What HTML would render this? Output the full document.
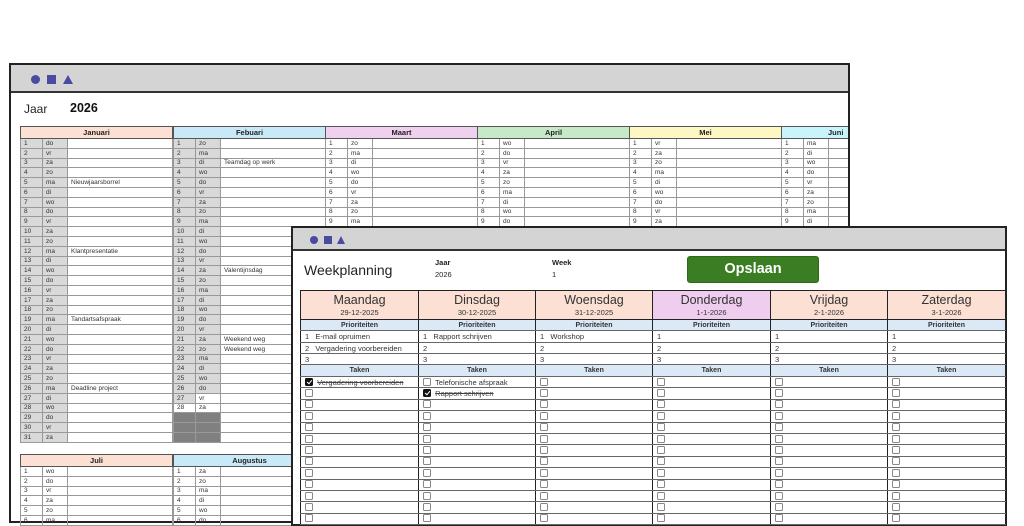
<!DOCTYPE html>
<html><head><meta charset="utf-8"><style>
*{margin:0;padding:0;box-sizing:border-box}
body{width:1024px;height:512px;overflow:hidden;background:#fff;font-family:"Liberation Sans",sans-serif;position:relative}
.sheet{position:absolute;background:#fff;border:2px solid #222}
.bar{position:absolute;left:0;right:0;top:0;background:#d4d4d4;border-bottom:2px solid #333}
.ic{position:absolute;background:#4a4aa0}
table{border-collapse:collapse;table-layout:fixed;position:absolute}
.cal td{border:1px solid #999;font-size:6.5px;line-height:7px;height:9.8px;padding:0 0 0 3px;color:#333;white-space:nowrap;overflow:hidden}
.cal td.n,.cal td.d{background:#d9d9d9}
.cal td.x{background:#808080}
.cal th{border:1px solid #555;font-size:7.5px;height:12px;font-weight:bold;color:#222}
.wk td{border-left:1.5px solid #222;border-right:1.5px solid #222;border-bottom:1px solid #666;font-size:7.5px;color:#333;padding-left:4px;white-space:nowrap;overflow:hidden}
.wk .hd{text-align:center;border-bottom:1.5px solid #222;padding:0;border-top:1.5px solid #222}
.wk .hd b{display:block;font-weight:normal;font-size:12.5px;color:#333;line-height:15px;margin-top:1px}
.wk .hd i{display:block;font-style:normal;font-size:7.5px;line-height:10px}
.wk .ph{background:#dbe8f6;text-align:center;font-weight:bold;padding:0;font-size:7px}
.cb{display:inline-block;width:8px;height:8px;border:1px solid #888;border-radius:1.5px;vertical-align:-1px;background:#fff}
.cb.k{background:#111;border-color:#111;position:relative}
.cb.k:after{content:"";position:absolute;left:2px;top:0px;width:2px;height:4px;border:solid #fff;border-width:0 1.2px 1.2px 0;transform:rotate(40deg)}
s{color:#444}
</style></head><body>

<div class="sheet" style="left:9px;top:63px;width:841px;height:460px">
<div class="bar" style="height:28px"></div>
<div class="ic" style="left:20px;top:10px;width:9px;height:9px;border-radius:50%"></div>
<div class="ic" style="left:36px;top:10px;width:9px;height:9px"></div>
<div style="position:absolute;left:52px;top:10px;width:0;height:0;border-left:5px solid transparent;border-right:5px solid transparent;border-bottom:9px solid #4a4aa0"></div>
<div style="position:absolute;left:13px;top:37px;font-size:12px;color:#222">Jaar</div>
<div style="position:absolute;left:59px;top:36px;font-size:12.5px;font-weight:bold;color:#111">2026</div>
</div>

<table class="cal" style="left:20px;top:126px;width:153px">
<colgroup><col style="width:22px"><col style="width:25px"><col></colgroup>
<tr><th colspan="3" style="background:#fbe0d3">Januari</th></tr>
<tr><td class="n">1</td><td class="d">do</td><td></td></tr><tr><td class="n">2</td><td class="d">vr</td><td></td></tr><tr><td class="n">3</td><td class="d">za</td><td></td></tr><tr><td class="n">4</td><td class="d">zo</td><td></td></tr><tr><td class="n">5</td><td class="d">ma</td><td>Nieuwjaarsborrel</td></tr><tr><td class="n">6</td><td class="d">di</td><td></td></tr><tr><td class="n">7</td><td class="d">wo</td><td></td></tr><tr><td class="n">8</td><td class="d">do</td><td></td></tr><tr><td class="n">9</td><td class="d">vr</td><td></td></tr><tr><td class="n">10</td><td class="d">za</td><td></td></tr><tr><td class="n">11</td><td class="d">zo</td><td></td></tr><tr><td class="n">12</td><td class="d">ma</td><td>Klantpresentatie</td></tr><tr><td class="n">13</td><td class="d">di</td><td></td></tr><tr><td class="n">14</td><td class="d">wo</td><td></td></tr><tr><td class="n">15</td><td class="d">do</td><td></td></tr><tr><td class="n">16</td><td class="d">vr</td><td></td></tr><tr><td class="n">17</td><td class="d">za</td><td></td></tr><tr><td class="n">18</td><td class="d">zo</td><td></td></tr><tr><td class="n">19</td><td class="d">ma</td><td>Tandartsafspraak</td></tr><tr><td class="n">20</td><td class="d">di</td><td></td></tr><tr><td class="n">21</td><td class="d">wo</td><td></td></tr><tr><td class="n">22</td><td class="d">do</td><td></td></tr><tr><td class="n">23</td><td class="d">vr</td><td></td></tr><tr><td class="n">24</td><td class="d">za</td><td></td></tr><tr><td class="n">25</td><td class="d">zo</td><td></td></tr><tr><td class="n">26</td><td class="d">ma</td><td>Deadline project</td></tr><tr><td class="n">27</td><td class="d">di</td><td></td></tr><tr><td class="n">28</td><td class="d">wo</td><td></td></tr><tr><td class="n">29</td><td class="d">do</td><td></td></tr><tr><td class="n">30</td><td class="d">vr</td><td></td></tr><tr><td class="n">31</td><td class="d">za</td><td></td></tr>
</table>

<table class="cal" style="left:173px;top:126px;width:153px">
<colgroup><col style="width:22px"><col style="width:25px"><col></colgroup>
<tr><th colspan="3" style="background:#c9e9f8">Febuari</th></tr>
<tr><td class="n">1</td><td class="d">zo</td><td></td></tr><tr><td class="n">2</td><td class="d">ma</td><td></td></tr><tr><td class="n">3</td><td class="d">di</td><td>Teamdag op werk</td></tr><tr><td class="n">4</td><td class="d">wo</td><td></td></tr><tr><td class="n">5</td><td class="d">do</td><td></td></tr><tr><td class="n">6</td><td class="d">vr</td><td></td></tr><tr><td class="n">7</td><td class="d">za</td><td></td></tr><tr><td class="n">8</td><td class="d">zo</td><td></td></tr><tr><td class="n">9</td><td class="d">ma</td><td></td></tr><tr><td class="n">10</td><td class="d">di</td><td></td></tr><tr><td class="n">11</td><td class="d">wo</td><td></td></tr><tr><td class="n">12</td><td class="d">do</td><td></td></tr><tr><td class="n">13</td><td class="d">vr</td><td></td></tr><tr><td class="n">14</td><td class="d">za</td><td>Valentijnsdag</td></tr><tr><td class="n">15</td><td class="d">zo</td><td></td></tr><tr><td class="n">16</td><td class="d">ma</td><td></td></tr><tr><td class="n">17</td><td class="d">di</td><td></td></tr><tr><td class="n">18</td><td class="d">wo</td><td></td></tr><tr><td class="n">19</td><td class="d">do</td><td></td></tr><tr><td class="n">20</td><td class="d">vr</td><td></td></tr><tr><td class="n">21</td><td class="d">za</td><td>Weekend weg</td></tr><tr><td class="n">22</td><td class="d">zo</td><td>Weekend weg</td></tr><tr><td class="n">23</td><td class="d">ma</td><td></td></tr><tr><td class="n">24</td><td class="d">di</td><td></td></tr><tr><td class="n">25</td><td class="d">wo</td><td></td></tr><tr><td class="n">26</td><td class="d">do</td><td></td></tr><tr><td class="n">27</td><td class="d" style="background:#fff">vr</td><td></td></tr><tr><td class="n" style="background:#fff">28</td><td class="d" style="background:#fff">za</td><td></td></tr><tr><td class="x"></td><td class="x"></td><td></td></tr><tr><td class="x"></td><td class="x"></td><td></td></tr><tr><td class="x"></td><td class="x"></td><td></td></tr>
</table>

<table class="cal" style="left:325px;top:126px;width:153px">
<colgroup><col style="width:22px"><col style="width:25px"><col></colgroup>
<tr><th colspan="3" style="background:#efd0ef">Maart</th></tr>
<tr><td>1</td><td>zo</td><td></td></tr><tr><td>2</td><td>ma</td><td></td></tr><tr><td>3</td><td>di</td><td></td></tr><tr><td>4</td><td>wo</td><td></td></tr><tr><td>5</td><td>do</td><td></td></tr><tr><td>6</td><td>vr</td><td></td></tr><tr><td>7</td><td>za</td><td></td></tr><tr><td>8</td><td>zo</td><td></td></tr><tr><td>9</td><td>ma</td><td></td></tr><tr><td>10</td><td>di</td><td></td></tr>
</table>
<table class="cal" style="left:477px;top:126px;width:153px">
<colgroup><col style="width:22px"><col style="width:25px"><col></colgroup>
<tr><th colspan="3" style="background:#c6eac8">April</th></tr>
<tr><td>1</td><td>wo</td><td></td></tr><tr><td>2</td><td>do</td><td></td></tr><tr><td>3</td><td>vr</td><td></td></tr><tr><td>4</td><td>za</td><td></td></tr><tr><td>5</td><td>zo</td><td></td></tr><tr><td>6</td><td>ma</td><td></td></tr><tr><td>7</td><td>di</td><td></td></tr><tr><td>8</td><td>wo</td><td></td></tr><tr><td>9</td><td>do</td><td></td></tr><tr><td>10</td><td>vr</td><td></td></tr>
</table>
<table class="cal" style="left:629px;top:126px;width:153px">
<colgroup><col style="width:22px"><col style="width:25px"><col></colgroup>
<tr><th colspan="3" style="background:#fdf7c3">Mei</th></tr>
<tr><td>1</td><td>vr</td><td></td></tr><tr><td>2</td><td>za</td><td></td></tr><tr><td>3</td><td>zo</td><td></td></tr><tr><td>4</td><td>ma</td><td></td></tr><tr><td>5</td><td>di</td><td></td></tr><tr><td>6</td><td>wo</td><td></td></tr><tr><td>7</td><td>do</td><td></td></tr><tr><td>8</td><td>vr</td><td></td></tr><tr><td>9</td><td>za</td><td></td></tr><tr><td>10</td><td>zo</td><td></td></tr>
</table>
<div style="position:absolute;left:781px;top:126px;width:67px;height:100px;overflow:hidden">
<table class="cal" style="left:0;top:0;width:153px">
<colgroup><col style="width:22px"><col style="width:25px"><col></colgroup>
<tr><th colspan="3" style="background:#c9f4fb;text-align:left;padding-left:46px">Juni</th></tr>
<tr><td>1</td><td>ma</td><td></td></tr><tr><td>2</td><td>di</td><td></td></tr><tr><td>3</td><td>wo</td><td></td></tr><tr><td>4</td><td>do</td><td></td></tr><tr><td>5</td><td>vr</td><td></td></tr><tr><td>6</td><td>za</td><td></td></tr><tr><td>7</td><td>zo</td><td></td></tr><tr><td>8</td><td>ma</td><td></td></tr><tr><td>9</td><td>di</td><td></td></tr><tr><td>10</td><td>wo</td><td></td></tr>
</table></div>

<table class="cal" style="left:20px;top:454px;width:153px">
<colgroup><col style="width:22px"><col style="width:25px"><col></colgroup>
<tr><th colspan="3" style="background:#fbe0d3">Juli</th></tr>
<tr><td>1</td><td>wo</td><td></td></tr><tr><td>2</td><td>do</td><td></td></tr><tr><td>3</td><td>vr</td><td></td></tr><tr><td>4</td><td>za</td><td></td></tr><tr><td>5</td><td>zo</td><td></td></tr><tr><td>6</td><td>ma</td><td></td></tr>
</table>
<table class="cal" style="left:173px;top:454px;width:153px">
<colgroup><col style="width:22px"><col style="width:25px"><col></colgroup>
<tr><th colspan="3" style="background:#c9e9f8">Augustus</th></tr>
<tr><td>1</td><td>za</td><td></td></tr><tr><td>2</td><td>zo</td><td></td></tr><tr><td>3</td><td>ma</td><td></td></tr><tr><td>4</td><td>di</td><td></td></tr><tr><td>5</td><td>wo</td><td></td></tr><tr><td>6</td><td>do</td><td></td></tr>
</table>

<div class="sheet" style="left:291px;top:226px;width:716px;height:300px">
<div class="bar" style="height:23px"></div>
<div class="ic" style="left:17px;top:8px;width:8px;height:8px;border-radius:50%"></div>
<div class="ic" style="left:31px;top:8px;width:8px;height:8px"></div>
<div style="position:absolute;left:44px;top:8px;width:0;height:0;border-left:4.5px solid transparent;border-right:4.5px solid transparent;border-bottom:8px solid #4a4aa0"></div>
<div style="position:absolute;left:11px;top:34px;font-size:14px;color:#222">Weekplanning</div>
<div style="position:absolute;left:142px;top:30px;font-size:7.5px;font-weight:bold;color:#222">Jaar</div>
<div style="position:absolute;left:142px;top:42px;font-size:7.5px;color:#222">2026</div>
<div style="position:absolute;left:259px;top:30px;font-size:7.5px;font-weight:bold;color:#222">Week</div>
<div style="position:absolute;left:259px;top:42px;font-size:7.5px;color:#222">1</div>
<div style="position:absolute;left:394px;top:28px;width:132px;height:27px;background:#3a7d22;border-radius:3px;border:1px solid #2e6a1a;color:#fff;font-weight:bold;font-size:14.5px;text-align:center;line-height:25px">Opslaan</div>
</div>

<table class="wk" style="left:300px;top:290px;width:705px">
<colgroup><col style="width:118px"><col style="width:117px"><col style="width:117px"><col style="width:118px"><col style="width:117px"><col style="width:118px"></colgroup>
<tr style="height:29px">
<td class="hd" style="background:#fbe0d3"><b>Maandag</b><i>29-12-2025</i></td>
<td class="hd" style="background:#fbe0d3"><b>Dinsdag</b><i>30-12-2025</i></td>
<td class="hd" style="background:#fbe0d3"><b>Woensdag</b><i>31-12-2025</i></td>
<td class="hd" style="background:#efcdef"><b>Donderdag</b><i>1-1-2026</i></td>
<td class="hd" style="background:#fbe0d3"><b>Vrijdag</b><i>2-1-2026</i></td>
<td class="hd" style="background:#fbe0d3"><b>Zaterdag</b><i>3-1-2026</i></td></tr>
<tr style="height:11px"><td class="ph">Prioriteiten</td><td class="ph">Prioriteiten</td><td class="ph">Prioriteiten</td><td class="ph">Prioriteiten</td><td class="ph">Prioriteiten</td><td class="ph">Prioriteiten</td></tr>
<tr style="height:12px"><td>1&nbsp;&nbsp; E-mail opruimen</td><td>1&nbsp;&nbsp; Rapport schrijven</td><td>1&nbsp;&nbsp; Workshop</td><td>1</td><td>1</td><td>1</td></tr>
<tr style="height:11px"><td>2&nbsp;&nbsp; Vergadering voorbereiden</td><td>2</td><td>2</td><td>2</td><td>2</td><td>2</td></tr>
<tr style="height:11px"><td>3</td><td>3</td><td>3</td><td>3</td><td>3</td><td>3</td></tr>
<tr style="height:12px"><td class="ph" style="border-top:1.5px solid #222">Taken</td><td class="ph" style="border-top:1.5px solid #222">Taken</td><td class="ph" style="border-top:1.5px solid #222">Taken</td><td class="ph" style="border-top:1.5px solid #222">Taken</td><td class="ph" style="border-top:1.5px solid #222">Taken</td><td class="ph" style="border-top:1.5px solid #222">Taken</td></tr>
<tr style="height:11.4px"><td><span class="cb k"></span>&nbsp; <s>Vergadering voorbereiden</s></td><td><span class="cb"></span>&nbsp; Telefonische afspraak</td><td><span class="cb"></span></td><td><span class="cb"></span></td><td><span class="cb"></span></td><td><span class="cb"></span></td></tr>
<tr style="height:11.4px"><td><span class="cb"></span></td><td><span class="cb k"></span>&nbsp; <s>Rapport schrijven</s></td><td><span class="cb"></span></td><td><span class="cb"></span></td><td><span class="cb"></span></td><td><span class="cb"></span></td></tr>
<tr style="height:11.4px"><td><span class="cb"></span></td><td><span class="cb"></span></td><td><span class="cb"></span></td><td><span class="cb"></span></td><td><span class="cb"></span></td><td><span class="cb"></span></td></tr>
<tr style="height:11.4px"><td><span class="cb"></span></td><td><span class="cb"></span></td><td><span class="cb"></span></td><td><span class="cb"></span></td><td><span class="cb"></span></td><td><span class="cb"></span></td></tr>
<tr style="height:11.4px"><td><span class="cb"></span></td><td><span class="cb"></span></td><td><span class="cb"></span></td><td><span class="cb"></span></td><td><span class="cb"></span></td><td><span class="cb"></span></td></tr>
<tr style="height:11.4px"><td><span class="cb"></span></td><td><span class="cb"></span></td><td><span class="cb"></span></td><td><span class="cb"></span></td><td><span class="cb"></span></td><td><span class="cb"></span></td></tr>
<tr style="height:11.4px"><td><span class="cb"></span></td><td><span class="cb"></span></td><td><span class="cb"></span></td><td><span class="cb"></span></td><td><span class="cb"></span></td><td><span class="cb"></span></td></tr>
<tr style="height:11.4px"><td><span class="cb"></span></td><td><span class="cb"></span></td><td><span class="cb"></span></td><td><span class="cb"></span></td><td><span class="cb"></span></td><td><span class="cb"></span></td></tr>
<tr style="height:11.4px"><td><span class="cb"></span></td><td><span class="cb"></span></td><td><span class="cb"></span></td><td><span class="cb"></span></td><td><span class="cb"></span></td><td><span class="cb"></span></td></tr>
<tr style="height:11.4px"><td><span class="cb"></span></td><td><span class="cb"></span></td><td><span class="cb"></span></td><td><span class="cb"></span></td><td><span class="cb"></span></td><td><span class="cb"></span></td></tr>
<tr style="height:11.4px"><td><span class="cb"></span></td><td><span class="cb"></span></td><td><span class="cb"></span></td><td><span class="cb"></span></td><td><span class="cb"></span></td><td><span class="cb"></span></td></tr>
<tr style="height:11.4px"><td><span class="cb"></span></td><td><span class="cb"></span></td><td><span class="cb"></span></td><td><span class="cb"></span></td><td><span class="cb"></span></td><td><span class="cb"></span></td></tr>
<tr style="height:11.4px"><td><span class="cb"></span></td><td><span class="cb"></span></td><td><span class="cb"></span></td><td><span class="cb"></span></td><td><span class="cb"></span></td><td><span class="cb"></span></td></tr>
</table>
</body></html>
